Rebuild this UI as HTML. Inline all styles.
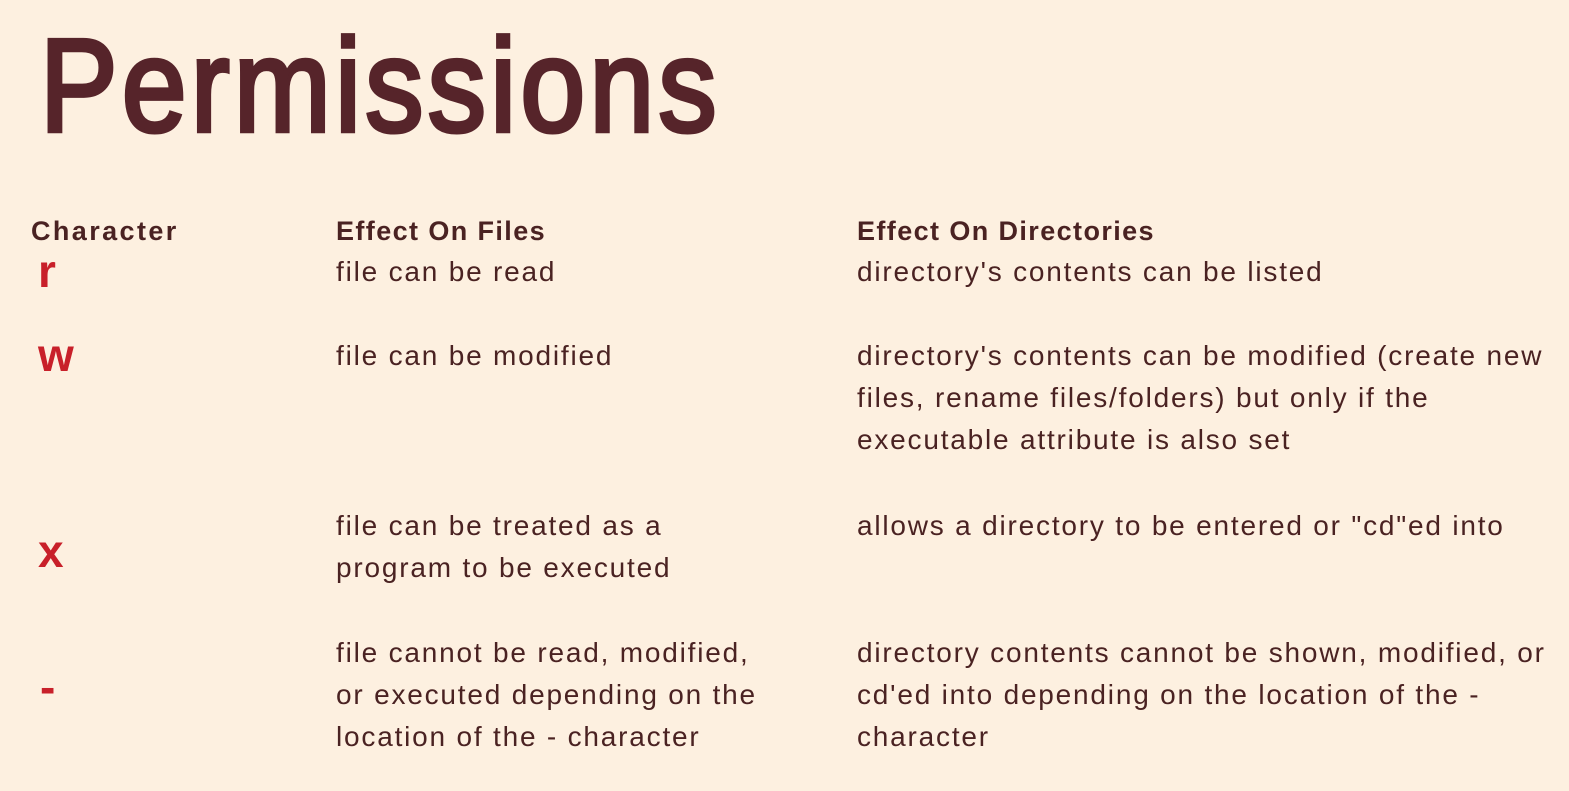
<!DOCTYPE html>
<html><head><meta charset="utf-8"><style>
html,body{margin:0;padding:0}
body{width:1569px;height:791px;background:#fdf0e0;position:relative;overflow:hidden;font-family:"Liberation Sans",sans-serif;color:#4a2222}
.t{position:absolute;font-size:28px;line-height:42px;white-space:nowrap;letter-spacing:1.8px}
.h{font-weight:bold;font-size:27px;letter-spacing:1.4px}
.c{position:absolute;color:#c8202a;font-weight:bold;font-size:46px;line-height:50px}
#title{position:absolute;left:40px;top:11px;font-size:132px;line-height:150px;font-weight:normal;-webkit-text-stroke:4.5px #56242a;color:#56242a;transform:scaleX(0.88);transform-origin:left top;letter-spacing:5px}
</style></head><body>
<div id="title">Permissions</div>
<div class="t h" style="left:31px;top:210px;letter-spacing:2.4px">Character</div>
<div class="t h" style="left:336px;top:210px">Effect On Files</div>
<div class="t h" style="left:857px;top:210px">Effect On Directories</div>

<div class="c" style="left:38px;top:246px">r</div>
<div class="t" style="left:336px;top:251px">file can be read</div>
<div class="t" style="left:857px;top:251px">directory's contents can be listed</div>

<div class="c" style="left:38px;top:330px">w</div>
<div class="t" style="left:336px;top:335px">file can be modified</div>
<div class="t" style="left:857px;top:335px">directory's contents can be modified (create new<br>files, rename files/folders) but only if the<br>executable attribute is also set</div>

<div class="c" style="left:38px;top:526px">x</div>
<div class="t" style="left:336px;top:505px">file can be treated as a<br>program to be executed</div>
<div class="t" style="left:857px;top:505px">allows a directory to be entered or "cd"ed into</div>

<div class="c" style="left:40px;top:662px">-</div>
<div class="t" style="left:336px;top:632px">file cannot be read, modified,<br>or executed depending on the<br>location of the - character</div>
<div class="t" style="left:857px;top:632px">directory contents cannot be shown, modified, or<br>cd'ed into depending on the location of the -<br>character</div>
</body></html>
